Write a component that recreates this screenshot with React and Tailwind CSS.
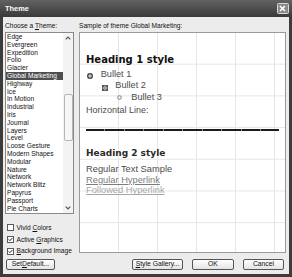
import React from 'react';

const themes = [
    'Edge', 'Evergreen', 'Expedition', 'Folio', 'Glacier', 'Global Marketing', 'Highway', 'Ice',
    'In Motion', 'Industrial', 'Iris', 'Journal', 'Layers', 'Level', 'Loose Gesture', 'Modern Shapes',
    'Modular', 'Nature', 'Network', 'Network Blitz', 'Papyrus', 'Passport', 'Pie Charts',
];

const Check = ({ checked, children }) => (
    <div className="h-[11.7px] flex items-center pl-[2px]">
        <span className="w-[7px] h-[7px] border border-[#5a5a5a] bg-white flex items-center justify-center">
            {checked && (
                <svg width="5" height="5" viewBox="0 0 5 5">
                    <path d="M0.6 2.4 L1.9 3.7 L4.4 1" stroke="#222" strokeWidth="1" fill="none" />
                </svg>
            )}
        </span>
        <span className="ml-[2.5px]">{children}</span>
    </div>
);

const Button = ({ className, children }) => (
    <div className={`h-[11px] border border-[#555] rounded-[2px] bg-gradient-to-b from-white to-[#e4e4e4] flex items-center justify-center text-[6.8px] ${className}`}>
        {children}
    </div>
);

export default function App() {
    return (
        <div className="w-[292px] h-[277px] bg-[#3c3c3c] flex flex-col font-['Liberation_Sans',Arial,sans-serif] text-[6.6px] leading-[7.8px] text-[#111]">
            {/* Title bar */}
            <div className="h-[17px] flex items-center justify-between pl-[5px] pr-[3.5px] bg-gradient-to-b from-[#626262] to-[#3a3a3a]">
                <span className="text-white font-bold text-[7.4px]">Theme</span>
                <div className="w-[11.5px] h-[11.5px] border border-[#d8d8d8] rounded-[1.5px] bg-[#888] flex items-center justify-center">
                    <svg width="7" height="7" viewBox="0 0 7 7">
                        <path d="M1 1 L6 6 M6 1 L1 6" stroke="white" strokeWidth="1.6" />
                    </svg>
                </div>
            </div>

            {/* Body */}
            <div className="flex-1 mx-[3px] mb-[3px] bg-[#ececec] flex flex-col pl-[2px] pr-[3px]">
                <div className="h-[241.5px] flex gap-[5px]">
                    {/* Left column */}
                    <div className="w-[69px] flex flex-col">
                        <div className="h-[15px] pt-[5px] leading-[8px]">
                            Choose a <u className="underline-offset-1">T</u>heme:
                        </div>
                        <div className="h-[182px] border border-[#8a8a8a] bg-white flex">
                            <div className="flex-1 overflow-hidden">
                                {themes.map((t) => (
                                    <div
                                        key={t}
                                        className={`h-[7.8px] pl-[1px] whitespace-nowrap ${t === 'Global Marketing' ? 'bg-[#4e4e4e] text-white' : ''}`}
                                    >
                                        {t}
                                    </div>
                                ))}
                            </div>
                            {/* Scrollbar */}
                            <div className="w-[10px] bg-[#f3f3f3] flex flex-col">
                                <div className="h-[10px] flex items-center justify-center">
                                    <svg width="6" height="4" viewBox="0 0 6 4">
                                        <path d="M0.7 3.3 L3 1 L5.3 3.3" stroke="#555" strokeWidth="1.2" fill="none" />
                                    </svg>
                                </div>
                                <div className="mt-[51px] h-[47px] mx-[0.5px] border border-[#b5b5b5] rounded-[2px] bg-[#f7f7f7]" />
                                <div className="flex-1" />
                                <div className="h-[10px] flex items-center justify-center">
                                    <svg width="6" height="4" viewBox="0 0 6 4">
                                        <path d="M0.7 0.7 L3 3 L5.3 0.7" stroke="#555" strokeWidth="1.2" fill="none" />
                                    </svg>
                                </div>
                            </div>
                        </div>
                        <div className="mt-[8px] flex flex-col">
                            <Check>Vivid <u>C</u>olors</Check>
                            <Check checked>Active <u>G</u>raphics</Check>
                            <Check checked><u>B</u>ackground Image</Check>
                        </div>
                    </div>

                    {/* Right column */}
                    <div className="flex-1 flex flex-col">
                        <div className="h-[15px] pt-[5px] leading-[8px]">Sample of theme Global Marketing:</div>
                        <div className="h-[221px] border border-[#9a9a9a] bg-white bg-[linear-gradient(to_right,#e6e6e6_1px,transparent_1px),linear-gradient(to_bottom,#e6e6e6_1px,transparent_1px)] bg-[size:39px_31.7px] bg-[position:-1px_-1px] pl-[6px] flex flex-col">
                            <div className="mt-[20.5px] font-['DejaVu_Sans',Verdana,sans-serif] font-bold text-[10px] leading-[12px] text-[#111]">
                                Heading 1 style
                            </div>
                            <div className="mt-[3.7px] text-[9.2px] leading-[11.3px] text-[#4c4c4c]">
                                <div className="flex items-start">
                                    <svg className="ml-[1px] mt-[4.3px]" width="6" height="6" viewBox="0 0 6 6">
                                        <circle cx="3" cy="3" r="3" fill="#3a3a3a" />
                                        <path d="M3 0.8 V5.2 M0.8 3 H5.2" stroke="white" strokeWidth="0.9" />
                                    </svg>
                                    <span className="ml-[7.7px]">Bullet 1</span>
                                </div>
                                <div className="flex items-start">
                                    <svg className="ml-[16px] mt-[4.2px]" width="6" height="6" viewBox="0 0 6 6">
                                        <rect width="6" height="6" fill="#585858" />
                                        <path d="M3 0.8 V5.2 M0.8 3 H5.2" stroke="white" strokeWidth="1" />
                                        <rect x="2.3" y="2.3" width="1.4" height="1.4" fill="#585858" />
                                    </svg>
                                    <span className="ml-[7.3px]">Bullet 2</span>
                                </div>
                                <div className="flex items-start">
                                    <svg className="ml-[31px] mt-[3.4px]" width="5" height="5" viewBox="0 0 5 5">
                                        <circle cx="2.5" cy="2.5" r="1.8" fill="white" stroke="#7a7a7a" strokeWidth="1" />
                                    </svg>
                                    <span className="ml-[9.3px]">Bullet 3</span>
                                </div>
                            </div>
                            <div className="mt-[1.5px] text-[9px] leading-[11px] text-[#4c4c4c]">Horizontal Line:</div>
                            <div className="mt-[13.3px] h-[2px] w-[193px] bg-[repeating-linear-gradient(to_right,#1c1c1c_0,#1c1c1c_18.5px,#8a8a8a_18.5px,#8a8a8a_19.5px)]" />
                            <div className="mt-[16.7px] font-['DejaVu_Sans',Verdana,sans-serif] font-bold text-[9px] leading-[11px] text-[#2a2a2a]">
                                Heading 2 style
                            </div>
                            <div className="mt-[5.3px] text-[9.3px] leading-[10.8px]">
                                <div className="text-[#4c4c4c]">Regular Text Sample</div>
                                <div className="text-[#7c7c7c] underline">Regular Hyperlink</div>
                                <div className="text-[#a8a8a8] underline">Followed Hyperlink</div>
                            </div>
                        </div>
                    </div>
                </div>

                {/* Bottom buttons */}
                <div className="flex items-start">
                    <Button className="ml-[1px] w-[49px]">Set <u>D</u>efault...</Button>
                    <div className="flex-1" />
                    <div className="flex gap-[9px] mr-[2px]">
                        <Button className="w-[51px]"><u>S</u>tyle Gallery...</Button>
                        <Button className="w-[42px]">OK</Button>
                        <Button className="w-[41px]">Cancel</Button>
                    </div>
                </div>
            </div>
        </div>
    );
}
